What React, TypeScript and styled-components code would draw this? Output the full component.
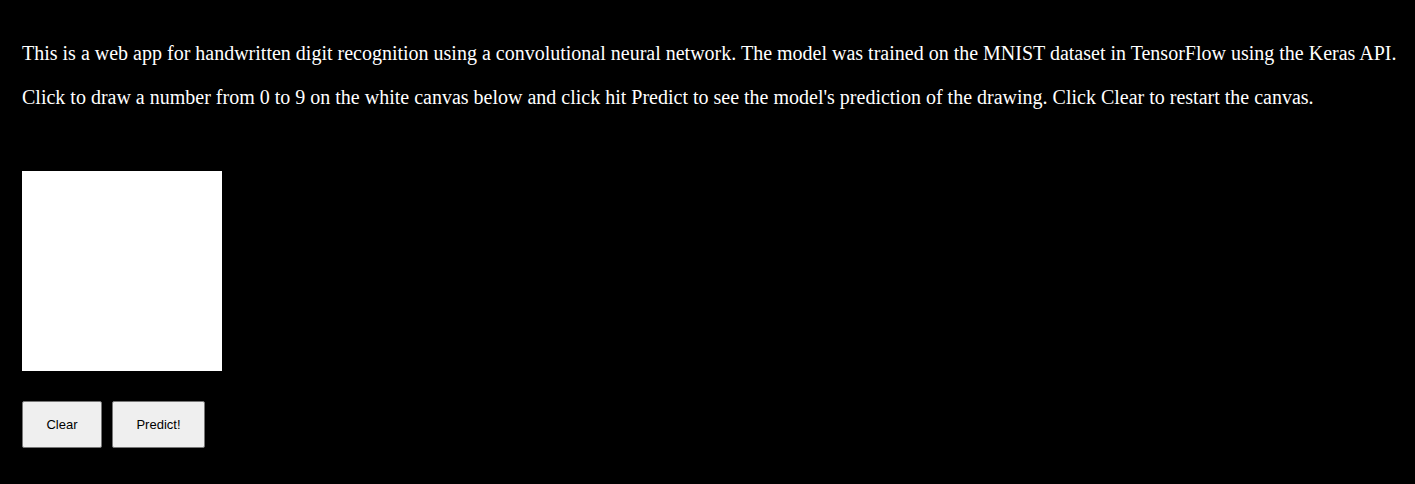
import React from 'react';
import styled, { createGlobalStyle } from 'styled-components';

const GlobalStyle = createGlobalStyle`
  body {
    margin: 0;
    background: #000;
    font-family: "Liberation Serif", "Times New Roman", serif;
  }
`;

const Wrapper = styled.main`
  padding: 22px 8px 0 22px;
  background: #000;
  min-height: 484px;
  box-sizing: border-box;
`;

const Intro = styled.p`
  color: #fff;
  font-size: 20px;
  line-height: 23px;
  margin: 20px 0 0 0;

  & + & {
    margin-top: 21px;
  }
`;

const Canvas = styled.div`
  width: 200px;
  height: 200px;
  background: #fff;
  margin-top: 62px;
`;

const ButtonRow = styled.div`
  display: flex;
  gap: 10px;
  margin-top: 30px;
`;

const Button = styled.button<{ $width: number }>`
  width: ${p => p.$width}px;
  height: 47px;
  background: #efefef;
  border: 1px solid #767676;
  border-radius: 2px;
  font-family: "Liberation Sans", Arial, sans-serif;
  font-size: 13px;
  color: #000;
  padding: 0;
`;

const App: React.FC = () => {
  return (
    <>
      <GlobalStyle />
      <Wrapper role='main'>
        <Intro>
          This is a web app for handwritten digit recognition using a convolutional neural network. The model was trained on the MNIST dataset in TensorFlow using the Keras API.
        </Intro>
        <Intro>
          Click to draw a number from 0 to 9 on the white canvas below and click hit Predict to see the model's prediction of the drawing. Click Clear to restart the canvas.
        </Intro>
        <Canvas />
        <ButtonRow>
          <Button $width={80}>Clear</Button>
          <Button $width={93}>Predict!</Button>
        </ButtonRow>
      </Wrapper>
    </>
  );
};

export default App;
